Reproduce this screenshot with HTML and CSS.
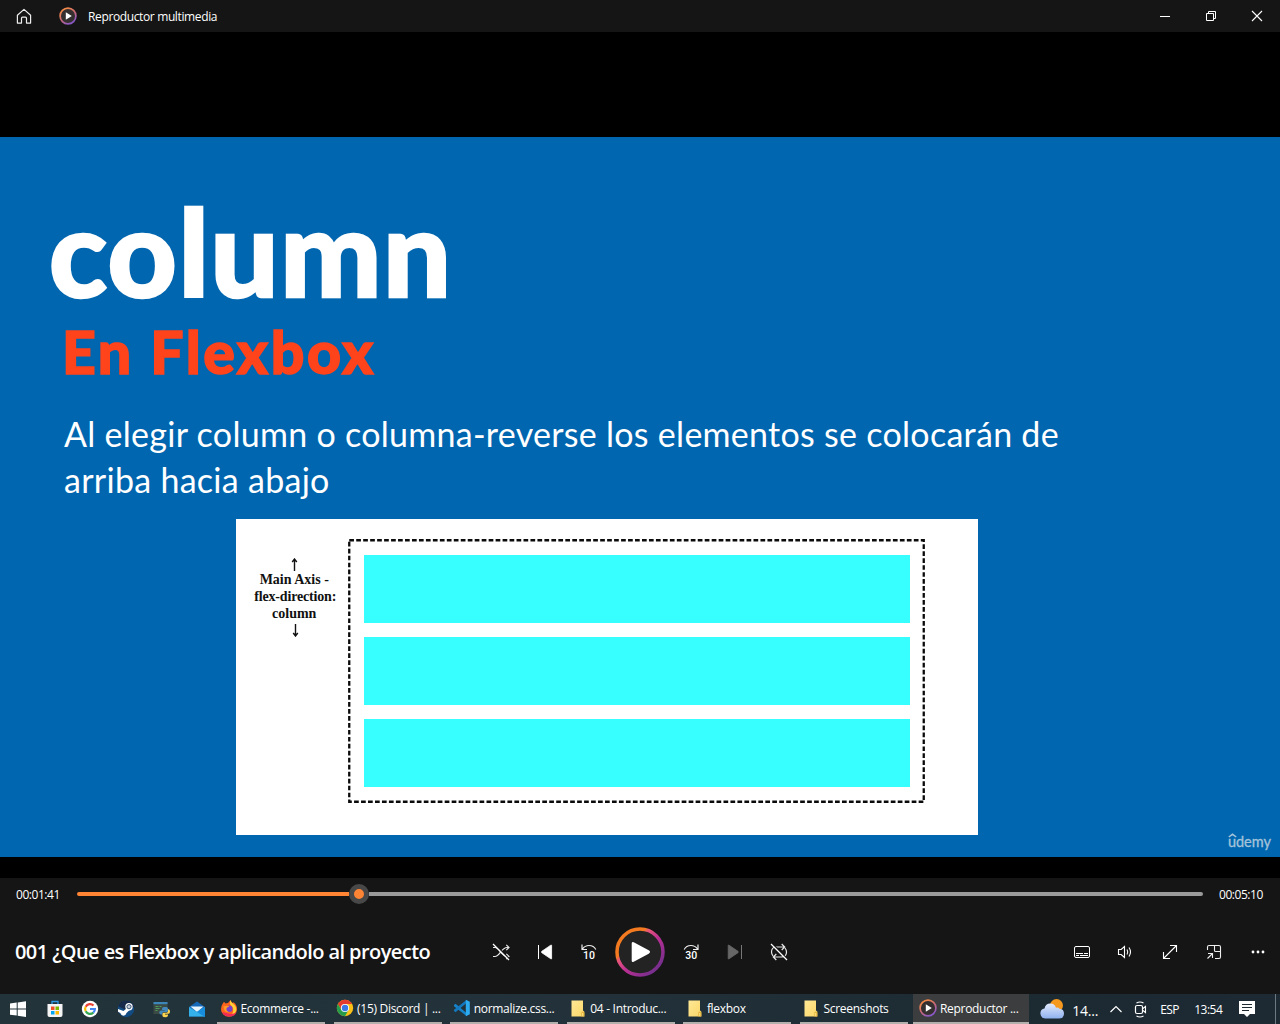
FILE: index.html
```
<!DOCTYPE html>
<html lang="es">
<head>
<meta charset="utf-8">
<title>Reproductor multimedia</title>
<link rel="stylesheet" href="styles.css">
</head>
<body>
<svg class="defs" width="0" height="0" aria-hidden="true">
  <defs>
    <linearGradient id="ring" x1="0" y1="0" x2="1" y2="1"><stop offset=".3" stop-color="#f47a20"/><stop offset=".36" stop-color="#e8557a"/><stop offset=".55" stop-color="#b92f93"/><stop offset=".85" stop-color="#7a2f8f"/></linearGradient>
    <linearGradient id="ringS" x1="0" y1="0" x2=".6" y2="1"><stop offset=".2" stop-color="#f0884a"/><stop offset=".6" stop-color="#c9687c"/><stop offset="1" stop-color="#8a58c8"/></linearGradient>
    <linearGradient id="cloud" x1="0" y1="0" x2="0" y2="1"><stop offset="0" stop-color="#e2eafc"/><stop offset="1" stop-color="#8fb1ee"/></linearGradient>
    <linearGradient id="folder" x1="0" y1="0" x2="1" y2="1"><stop offset="0" stop-color="#ffe896"/><stop offset="1" stop-color="#fbd767"/></linearGradient>
    <symbol id="media" viewBox="0 0 18 18"><circle cx="9" cy="9" r="7.900" fill="#35302f" stroke="url(#ringS)" stroke-width="1.700"/><path d="M6.800 5.200v7.600L12.800 9z" fill="#fff"/></symbol>
    <symbol id="dir" viewBox="0 0 14 17"><path d="M.5.5h11.500v10l1.300 1v5H.5z" fill="url(#folder)"/><path d="M10.300 16.500v-4l1.700-1.200 1.400 1.200v4z" fill="#e5b53c"/><path d="M11.200 16v-3h1v3z" fill="#ffe58d"/></symbol>
  </defs>
</svg>
<div class="player">
  <header class="titlebar">
    <svg class="home" width="16" height="17" viewBox="0 0 16 17"><path d="M1.400 7.300 8 1.400l6.600 5.900v7.800h-4.100v-4.900c0-.6-.4-1-1-1h-3c-.6 0-1 .4-1 1v4.900H1.400z" fill="none" stroke="#eee" stroke-width="1.200" stroke-linejoin="round"/></svg>
    <svg class="logo" width="18" height="18"><use href="#media"/></svg>
    <span class="app-name">Reproductor multimedia</span>
    <div class="caption">
      <svg width="46" height="32" viewBox="0 0 46 32"><path d="M18 16.500h10" stroke="#fff"/></svg>
      <svg width="46" height="32" viewBox="0 0 46 32"><path d="M18.500 13.500h7v7h-7zM20.500 13v-1.500h7v7H26" fill="none" stroke="#fff"/></svg>
      <svg width="46" height="32" viewBox="0 0 46 32"><path d="m18 11 10 10M28 11 18 21" stroke="#fff" stroke-width="1.100"/></svg>
    </div>
  </header>
  <main class="stage">
    <section class="slide">
      <h1 class="heading">column</h1>
      <h2 class="subheading">En Flexbox</h2>
      <p class="lead">Al elegir column o columna-reverse los elementos se colocarán de<br>arriba hacia abajo</p>
      <div class="figure">
        <div class="axis">
          <svg width="7" height="13" viewBox="0 0 7 13"><path d="M3.500 13V1.500M1.200 4 3.500 1l2.300 3" fill="none" stroke="#111" stroke-width="1.400"/></svg>
          <p>Main Axis -<br><span class="tight">flex-direction:</span><br>column</p>
          <svg class="down" width="7" height="13" viewBox="0 0 7 13"><path d="M3.500 0v11.500M1.200 9l2.300 3 2.300-3" fill="none" stroke="#111" stroke-width="1.400"/></svg>
        </div>
        <div class="flexbox">
          <svg class="dashes" width="577" height="264" viewBox="0 0 577 264"><rect x="1.250" y="1.250" width="574.500" height="261.500" fill="none" stroke="#0a0a0a" stroke-width="2.300" stroke-dasharray="4.700 2.270"/></svg>
          <div class="row"></div><div class="row"></div><div class="row"></div>
        </div>
      </div>
      <div class="udemy"><span class="u">u<svg width="9" height="5" viewBox="0 0 9 5"><path d="M.8 4 4.500 1.300 8.200 4" fill="none" stroke="currentColor" stroke-width="1.500"/></svg></span>demy</div>
    </section>
  </main>
  <footer class="controls">
    <div class="timeline">
      <span class="time">00:01:41</span>
      <div class="track"><div class="played"></div><div class="thumb"></div><div class="remaining"></div></div>
      <span class="time">00:05:10</span>
    </div>
    <div class="buttons">
      <div class="video-title"><span>001 ¿Que es Flexbox y aplicandolo al proyecto</span></div>
      <div class="transport">
        <svg class="btn" viewBox="0 0 44 44"><g fill="none" stroke="#e8e8e8" stroke-width="1.200"><path d="M14 17.500h2c4.500 0 6.500 9 12 9h2M14 26.500h2c4.500 0 6.500-9 12-9h2M27.300 14.800l2.700 2.700-2.700 2.700M27.300 23.800l2.700 2.700-2.700 2.700"/></g><path d="m15.500 14 15 15" stroke="#151515" stroke-width="1.500"/><path d="m14 14 16 16" stroke="#fff" stroke-width="1.200"/></svg>
        <svg class="btn" viewBox="0 0 44 44"><path d="M15.500 15v14" stroke="#fff"/><path d="M28.600 15.500v13q0 .8-.8.300l-9-6.100q-.8-.7 0-1.400l9-6.100q.8-.5.8.300z" fill="#fff" stroke="#fff" stroke-width=".8"/></svg>
        <svg class="btn" viewBox="0 0 44 44"><path d="M15 14.500v5h5M15.500 19c2-2.800 4.500-3.500 6.500-3.500 3 0 5.500 1.400 6.800 4" fill="none" stroke="#eee" stroke-width="1.200"/><text class="jump" x="16" y="29">10</text></svg>
        <svg class="play" width="58" height="58" viewBox="0 0 58 58"><circle cx="29" cy="29" r="23" fill="#232323" stroke="url(#ring)" stroke-width="3.500"/><path d="M20.700 20.500q0-2.300 2-1.200l15 8q2.700 1.700 0 3.400l-15 8q-2 1-2-1.200z" fill="#fff"/></svg>
        <svg class="btn" viewBox="0 0 44 44"><path d="M29 14.500v5h-5M28.500 19c-2-2.800-4.500-3.500-6.500-3.500-3 0-5.500 1.400-6.800 4" fill="none" stroke="#eee" stroke-width="1.200"/><text class="jump" x="16.200" y="29">30</text></svg>
        <svg class="btn" viewBox="0 0 44 44"><path d="M28.500 15v14" stroke="#777"/><path d="M15.200 15.500v13q0 .8.800.300l9-6.100q.8-.7 0-1.400l-9-6.100q-.8-.5-.8.300z" fill="#676767" stroke="#676767" stroke-width=".8"/></svg>
        <svg class="btn" viewBox="0 0 44 44"><g fill="none" stroke="#e8e8e8" stroke-width="1.200"><path d="M16 26c-1.200-1.500-1.500-2.500-1.500-4 0-3 2-5 5-5h8M24.700 14l3 3-3 3M28 18c1.200 1.500 1.500 2.500 1.500 4 0 3-2 5-5 5h-8M19.300 24l-3 3 3 3"/></g><path d="m15.500 14 15 15" stroke="#151515" stroke-width="1.500"/><path d="m14 14 16 16" stroke="#fff" stroke-width="1.200"/></svg>
      </div>
      <div class="extras">
        <svg class="btn" viewBox="0 0 44 44"><rect x="14.500" y="16.500" width="15" height="11" rx="1.500" fill="none" stroke="#fff"/><path d="M16 23.500h7m1 0h4M16 25.500h3m1 0h8" stroke="#fff"/></svg>
        <svg class="btn" viewBox="0 0 44 44"><path d="M14.500 19.500h2.700l3.300-3v11l-3.300-3h-2.700zM23 19.500q1.500 2.500 0 5M25 17.500q3 4.500 0 9" fill="none" stroke="#fff" stroke-width="1.100"/></svg>
        <svg class="btn" viewBox="0 0 44 44"><path d="m15.500 28.500 13-13M22 15.500h6.500V22M15.500 22v6.500H22" fill="none" stroke="#fff" stroke-width="1.100"/></svg>
        <svg class="btn" viewBox="0 0 44 44"><path d="M15.500 20v-3q0-1.500 1.500-1.500h10q1.500 0 1.500 1.500v10q0 1.500-1.500 1.500h-4M22.500 15.500v5q0 1 1 1h5M15.500 28.500l5-5M16 23.500h4.500V28" fill="none" stroke="#eee" stroke-width="1.100"/></svg>
        <svg class="btn" viewBox="0 0 44 44"><g fill="#fff"><circle cx="17" cy="22" r="1.400"/><circle cx="22" cy="22" r="1.400"/><circle cx="27" cy="22" r="1.400"/></g></svg>
      </div>
    </div>
  </footer>
</div>
<nav class="taskbar">
  <div class="pinned">
    <svg viewBox="0 0 18 18"><path d="M1 3.500 7.700 2.600v6H1zM8.700 2.400 17 1.200v7.400H8.700zM1 9.600h6.700v6L1 14.700zM8.700 9.600H17V17l-8.300-1.200z" fill="#fff"/></svg>
    <svg viewBox="0 0 18 18"><path d="M6 4V1.500h6V4" fill="none" stroke="#2f9ae0" stroke-width="1.300"/><path d="M1.500 4h15v11q0 2-2 2h-11q-2 0-2-2z" fill="#f4f4f4"/><path d="M5 6.500h3.500V10H5z" fill="#f25022"/><path d="M9.500 6.500H13V10H9.500z" fill="#7fba00"/><path d="M5 11h3.500v3.500H5z" fill="#00a4ef"/><path d="M9.500 11H13v3.500H9.500z" fill="#ffb900"/></svg>
    <svg viewBox="0 0 18 18"><circle cx="9" cy="9" r="8.200" fill="#fff"/><g fill="none" stroke-width="2.200"><path d="M12.500 5.500A4.900 4.900 0 0 0 4.700 6.700" stroke="#ea4335"/><path d="M4.700 6.700a4.900 4.900 0 0 0 0 4.600" stroke="#fbbc05"/><path d="M4.700 11.300a4.900 4.900 0 0 0 7.600 1.300" stroke="#34a853"/><path d="M12.300 12.600A4.900 4.900 0 0 0 13.900 9H9" stroke="#4285f4"/></g></svg>
    <svg viewBox="0 0 18 18"><circle cx="9" cy="9" r="8.200" fill="#124b82"/><path d="M1.300 6.200A8.200 8.200 0 0 1 17 7L9 10z" fill="#16294b"/><path d="m1 9 5.500 2L10 8l3.500 1-4 4q-.7 2.700-3 2.700T3.300 13L1 11.700z" fill="#fff"/><circle cx="12" cy="6.700" r="3.700" fill="#fff"/><circle cx="12" cy="6.700" r="2.100" fill="#c5ccd8" stroke="#17375f" stroke-width=".8"/></svg>
    <svg viewBox="0 0 18 18"><path d="M1.500 2h14v12h-14z" fill="#3c4a45"/><path d="M1.500 2h14v2.200h-14z" fill="#3c86ba"/><path d="M3.500 6.500h3m1 0h2M3.500 8.500h4M3.500 10.500h2" stroke="#4f9c5a"/><path d="M12 7h2.200q1.800 0 1.800 1.800v1.700q0 1.500-1.500 1.500h-3q-1.300 0-1.300 1.500v1H9q-1.700 0-1.700-2t1.700-2h3.800V10H10V8.800Q10 7 12 7z" fill="#4489bd"/><path d="M16 9.200h.7q1.300.2 1.300 2.300 0 2.300-1.500 2.300H13v.6h3v1.200q0 1.600-2.700 1.600-2.900 0-2.900-1.800v-1.200q0-1.400 1.500-1.400h2.700q1.400 0 1.400-1.700z" fill="#ffd34e"/></svg>
    <svg viewBox="0 0 18 18"><path d="M1 7 9 1.500 17 7v9.500H1z" fill="#1569b8"/><path d="M2.500 6.500h13L9 12z" fill="#e9f5fc"/><path d="M1 7l8 5 8-5v9.500H1z" fill="#34b0ea"/><path d="M17 7v9.500h-1L9 12z" fill="#188ddb"/></svg>
  </div>
  <div class="apps">
    <div class="app"><svg viewBox="0 0 18 18"><path d="M2.800 4.500 4 2.700l1.500 1.800q1-.5 2.500-.4L10.500 1q.5 2 2.300 3l.9-.7q3.500 3 3.300 7a8 7.500 0 0 1-16 0Q1 7 2.800 4.500z" fill="#ff641d"/><path d="M10.500 1q.5 2 2.300 3.500 4.200 2.700 3.300 7.500-1 3-4 3.500 2-3 .9-6.500-1-2-2-2.500Q9 4.500 10.500 1z" fill="#ffcf36"/><path d="M2 13q2 4.500 7.500 4.500T16.500 13q-2 2.500-6 2z" fill="#f02b58"/><circle cx="9.200" cy="9.800" r="3.300" fill="#7641cf"/><path d="M3.500 7.500q4-1.500 6 .3-2.500.2-3 1.700-.5 2.500 2.500 3.500-5 1-5.500-5.500z" fill="#ff992a"/></svg><span>Ecommerce -...</span></div>
    <div class="app"><svg viewBox="0 0 18 18"><circle cx="9" cy="9" r="8.200" fill="#fbc116"/><path d="M1.900 4.900A8.200 8.200 0 0 1 16.100 4.900H9L5.500 11z" fill="#e33b2e"/><path d="M1.900 4.900A8.200 8.200 0 0 0 9 17.200l3.500-6.100H5.500z" fill="#269b4c"/><circle cx="9" cy="9" r="4.100" fill="#fff"/><circle cx="9" cy="9" r="3.200" fill="#3978e7"/></svg><span>(15) Discord | ...</span></div>
    <div class="app"><svg viewBox="0 0 18 18"><path d="m1 6 1.500-1.300 11 9.300v3L1 7.200z" fill="#1683cb"/><path d="m1 12 1.500 1.300L13.500 4V1L1 10.800z" fill="#1478bf"/><path d="m12.800.8 4 2v12.500l-4 2z" fill="#2cabf1"/></svg><span>normalize.css...</span></div>
    <div class="app"><svg class="dir" viewBox="0 0 14 17"><use href="#dir"/></svg><span>04 - Introduc...</span></div>
    <div class="app"><svg class="dir" viewBox="0 0 14 17"><use href="#dir"/></svg><span>flexbox</span></div>
    <div class="app"><svg class="dir" viewBox="0 0 14 17"><use href="#dir"/></svg><span>Screenshots</span></div>
    <div class="app active"><svg viewBox="0 0 18 18"><use href="#media"/></svg><span>Reproductor ...</span></div>
  </div>
  <div class="tray">
    <svg class="weather" width="26" height="22" viewBox="0 0 26 22"><circle cx="17.500" cy="7.500" r="6.500" fill="#f59a1e"/><path d="M6 20.500a5 5 0 0 1-.5-9.900Q6.500 5.500 11.300 5.500q4.200 0 5.700 4.200 2-.8 3.500 1 4.500.2 4.500 5t-5 4.800z" fill="url(#cloud)"/></svg>
    <span class="temp">14...</span>
    <svg class="chev" width="14" height="10" viewBox="0 0 14 10"><path d="m1.500 8 5.500-5.500L12.500 8" fill="none" stroke="#fff" stroke-width="1.200"/></svg>
    <svg class="meet" width="14" height="18" viewBox="0 0 14 18"><rect x="1.500" y="5.500" width="7" height="8" rx="1.500" fill="none" stroke="#fff" stroke-width="1.200"/><path d="m9 8.500 2.500-2v6L9 10.500M2.500 3q3.500-2 7 0M2.500 16q3.500 2 7 0" fill="none" stroke="#fff" stroke-width="1.100"/></svg>
    <span class="lang">ESP</span>
    <span class="clock">13:54</span>
    <svg class="note" width="16" height="16" viewBox="0 0 16 16"><path d="M0 0h16v13h-5l-3 3-3-3H0z" fill="#fff"/><path d="M3 3.500h10M3 6.500h10M3 9.500h7" stroke="#1d2a31"/></svg>
    <div class="show-desktop"></div>
  </div>
</nav>
</body>
</html>
```
FILE: styles.css
```
* { box-sizing: border-box; }
body { margin: 0; width: 1280px; height: 1024px; overflow: hidden; display: flex; flex-direction: column; background: #000; color: #fff; font-family: "Open Sans", "Noto Sans", sans-serif; font-size: 12px; }
h1, h2, p { margin: 0; }
svg { display: block; flex: none; }
span { white-space: nowrap; }
.defs { position: absolute; }
.player { height: 994px; display: flex; flex-direction: column; }

.titlebar { height: 32px; background: #151515; display: flex; align-items: center; padding-left: 16px; }
.logo { margin-left: 27px; }
.app-name { margin-left: 11px; letter-spacing: -0.37px; }
.caption { margin-left: auto; display: flex; }

.stage { flex: 1; padding-top: 105px; }
.slide { position: relative; height: 720px; background: #0066b0; padding-top: 52px; font-family: Lato, sans-serif; }
.heading { height: 124px; line-height: 124px; padding-left: 49px; font-size: 120px; font-weight: 900; letter-spacing: 1.6px; -webkit-text-stroke: 2.5px #fff; }
.subheading { height: 70px; line-height: 70px; margin-top: 4px; padding-left: 62px; font-size: 59px; font-weight: 900; letter-spacing: 2.5px; color: #ff431b; -webkit-text-stroke: 1.5px #ff431b; }
.lead { height: 132px; padding: 24px 0 0 64px; font-size: 34px; line-height: 45.5px; letter-spacing: 0.28px; }
.figure { width: 742.5px; height: 315.5px; margin-left: 235.5px; background: #fff; display: flex; padding-top: 20px; }
.axis { width: 112.5px; padding: 19px 0 0 5px; display: flex; flex-direction: column; align-items: center; color: #111; font: bold 14px/17px "Liberation Serif", serif; text-align: center; }
.axis .down { margin: 2px 0 0 3px; }
.tight { letter-spacing: -0.17px; padding-left: 2px; }
.flexbox { position: relative; width: 577px; height: 264px; padding: 16px 15px 16px 16px; display: flex; flex-direction: column; gap: 14px; }
.dashes { position: absolute; left: 0; top: 0; }
.row { height: 68px; background: #37ffff; }
.udemy { position: absolute; right: 9px; bottom: 6px; color: #a5c3da; font-size: 14.500px; line-height: 18px; -webkit-text-stroke: 0.3px #a5c3da; }
.u { position: relative; }
.u svg { position: absolute; left: 0; top: 0; }

.controls { height: 116px; background: #151515; }
.timeline { height: 32px; display: flex; align-items: center; padding: 0 16px; }
.time { width: 45px; letter-spacing: -0.45px; }
.track { flex: 1; display: flex; align-items: center; margin: 0 16px 0 16px; }
.played { width: 272px; height: 4px; border-radius: 2px 0 0 2px; background: #ff8434; }
.thumb { width: 20px; height: 20px; border-radius: 50%; background: #ff8434; border: 5px solid #484848; }
.remaining { flex: 1; height: 4px; border-radius: 0 2px 2px 0; background: #9a9a9a; }
.timeline .time:last-child { width: 45px; }
.buttons { height: 84px; display: grid; grid-template-columns: 479px 322px 1fr; align-items: center; }
.video-title { padding: 0 0 2px 15px; font-size: 20px; font-weight: 600; letter-spacing: -0.57px; }
.transport, .extras { display: flex; align-items: center; }
.extras { justify-content: flex-end; }
.btn { width: 44px; height: 44px; }
.jump { font: 500 10.500px Roboto, sans-serif; fill: #fff; }

.taskbar { height: 30px; display: flex; background: linear-gradient(90deg, #22333a, #23323a 45%, #1c2a32 80%, #1d2933); }
.pinned { width: 213px; display: flex; gap: 17.500px; align-items: center; padding-left: 9px; }
.pinned svg, .app svg { width: 18px; height: 18px; }
.pinned svg:nth-child(2), .pinned svg:nth-child(2) ~ svg { transform: translateX(1px); }
.pinned svg:last-child { transform: translateX(-0.5px); }
.apps { display: grid; grid-template-columns: repeat(7, 116.600px); }
.app { margin: 0 4.600px 0 4px; padding-left: 2.500px; display: flex; align-items: center; gap: 3px; border-bottom: 2px solid #b2afac; letter-spacing: -0.3px; }
.app.active { margin: 0 0 0 .4px; padding-left: 6px; background: #3b3d3e; }
.app span, .temp, .lang, .clock { padding-top: 1px; }
.app .dir { width: 14px; height: 17px; margin: 0 2px; }
.tray { flex: 1; display: flex; align-items: center; padding-left: 10px; }
.temp { width: 37px; margin-left: 7px; font-size: 14px; padding-top: 2px; letter-spacing: -.2px; }
.meet { margin: 0 0 0 11px; }
.lang { width: 34px; margin-left: 12px; letter-spacing: -.6px; }
.clock { width: 45px; letter-spacing: -.5px; }
.show-desktop { width: 1px; height: 30px; background: #6c7980; margin-left: 20px; }
```
